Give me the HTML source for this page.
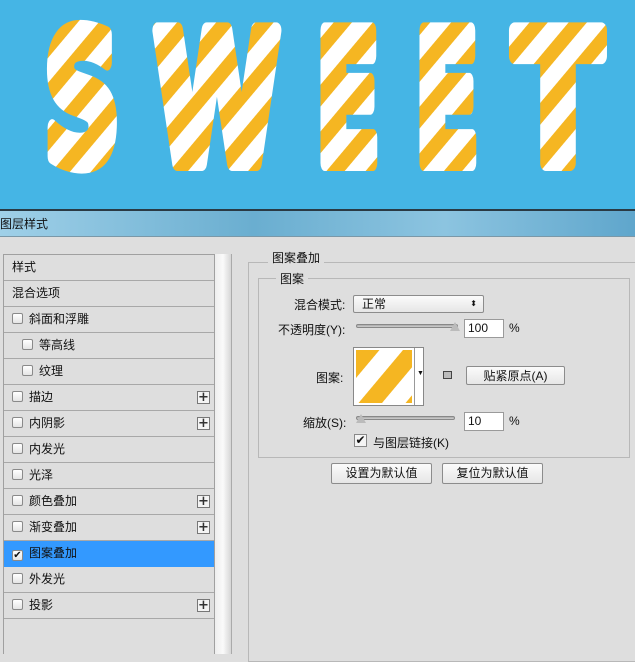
<!DOCTYPE html>
<html><head><meta charset="utf-8"><style>
*{margin:0;padding:0;box-sizing:border-box}
body{width:635px;height:650px;overflow:hidden;background:#dedede;font-family:"Liberation Sans","Noto Sans CJK SC",sans-serif;font-size:12px;color:#111;position:relative}
.a{position:absolute}
.row{position:absolute;left:4px;width:210px;height:26px;border-bottom:1px solid #a8a8a8;line-height:25px;padding-left:8px}
.cb{display:inline-block;width:11px;height:11px;border:1px solid #8a8a8a;background:linear-gradient(#fff,#e4e4e4);border-radius:2px;vertical-align:-1px;margin-right:6px}
.plus{position:absolute;right:4px;top:6px;width:13px;height:13px;border:1px solid #777;background:#f4f4f4;font:bold 13px/11px "DejaVu Sans",sans-serif;text-align:center;color:#333}
.btn{position:absolute;border:1px solid #8c8c8c;border-radius:2px;background:linear-gradient(#fbfbfb,#e6e6e6);text-align:center;line-height:18px}
.inp{position:absolute;background:#fff;border:1px solid #9a9a9a;padding-left:3px;line-height:17px}
.track{position:absolute;height:4px;border:1px solid #888;border-radius:2px;background:linear-gradient(#aaa,#d0d0d0)}
</style></head><body>
<svg class="a" style="left:0;top:0" width="635" height="211">
<defs><pattern id="p" patternUnits="userSpaceOnUse" width="30" height="30" patternTransform="rotate(40)"><rect width="30" height="30" fill="#fff"/><rect width="14" height="30" fill="#f5b622"/></pattern></defs>
<rect width="635" height="211" fill="#45b5e5"/>
<g fill="url(#p)" stroke="url(#p)" stroke-width="16" stroke-linejoin="round" font-family="DejaVu Sans" font-weight="bold" font-size="182">
<text x="44" y="163" textLength="76" lengthAdjust="spacingAndGlyphs">S</text>
<text x="154" y="163" textLength="126" lengthAdjust="spacingAndGlyphs">W</text>
<text x="316" y="163" textLength="64" lengthAdjust="spacingAndGlyphs">E</text>
<text x="415" y="163" textLength="64" lengthAdjust="spacingAndGlyphs">E</text>
<text x="514" y="163" textLength="88" lengthAdjust="spacingAndGlyphs">T</text>
</g>
<rect y="209" width="635" height="2" fill="#2a3a44"/>
</svg>
<div class="a" style="left:0;top:211px;width:635px;height:26px;background:linear-gradient(90deg,#9fd0e8,#6aaed0 40%,#8cc4e0 70%,#5fa6cc);line-height:26px;font-size:12px;border-bottom:1px solid #7a98a8">图层样式</div>
<div class="a" style="left:3px;top:254px;width:212px;height:400px;border:1px solid #a0a0a0;border-bottom:none"></div>
<div class="a" style="left:215px;top:254px;width:17px;height:400px;background:linear-gradient(90deg,#eee,#fafafa,#d6d6d6);border-right:1px solid #aaa"></div>
<div class="row" style="top:255px">样式</div>
<div class="row" style="top:281px">混合选项</div>
<div class="row" style="top:307px"><span class="cb"></span>斜面和浮雕</div>
<div class="row" style="top:333px;padding-left:18px"><span class="cb"></span>等高线</div>
<div class="row" style="top:359px;padding-left:18px"><span class="cb"></span>纹理</div>
<div class="row" style="top:385px"><span class="cb"></span>描边<span class="plus">+</span></div>
<div class="row" style="top:411px"><span class="cb"></span>内阴影<span class="plus">+</span></div>
<div class="row" style="top:437px"><span class="cb"></span>内发光</div>
<div class="row" style="top:463px"><span class="cb"></span>光泽</div>
<div class="row" style="top:489px"><span class="cb"></span>颜色叠加<span class="plus">+</span></div>
<div class="row" style="top:515px"><span class="cb"></span>渐变叠加<span class="plus">+</span></div>
<div class="row" style="top:541px;background:#3399ff;border-bottom-color:#3399ff"><span class="cb" style="font-size:10px;line-height:9px;text-align:center">✔</span>图案叠加</div>
<div class="row" style="top:567px"><span class="cb"></span>外发光</div>
<div class="row" style="top:593px"><span class="cb"></span>投影<span class="plus">+</span></div>
<div class="a" style="left:248px;top:262px;width:400px;height:400px;border:1px solid #b8b8b8"></div>
<div class="a" style="left:268px;top:249px;background:#dedede;padding:0 4px">图案叠加</div>
<div class="a" style="left:258px;top:278px;width:372px;height:180px;border:1px solid #b8b8b8"></div>
<div class="a" style="left:276px;top:270px;background:#dedede;padding:0 4px">图案</div>
<div class="a" style="left:294px;top:296px">混合模式:</div>
<div class="btn" style="left:353px;top:295px;width:131px;height:18px;text-align:left;padding-left:8px;line-height:16px">正常<span style="position:absolute;right:6px;font-size:8px">⬍</span></div>
<div class="a" style="left:278px;top:321px">不透明度(Y):</div>
<div class="track" style="left:356px;top:324px;width:102px"></div>
<div class="a" style="left:450px;top:322px;width:0;height:0;border-left:5px solid transparent;border-right:5px solid transparent;border-bottom:9px solid #bbb"></div>
<div class="inp" style="left:464px;top:319px;width:40px;height:19px">100</div>
<div class="a" style="left:509px;top:321px">%</div>
<div class="a" style="left:316px;top:369px">图案:</div>
<div class="a" style="left:353px;top:347px;width:71px;height:59px;border:1px solid #888;background:#fff"></div>
<svg class="a" style="left:356px;top:350px" width="56" height="53"><defs><pattern id="q" patternUnits="userSpaceOnUse" width="36" height="36" patternTransform="rotate(40)"><rect width="36" height="36" fill="#fff"/><rect width="18" height="36" fill="#f5b622"/></pattern></defs><rect width="56" height="53" fill="url(#q)"/></svg>
<div class="a" style="left:414px;top:348px;width:1px;height:57px;background:#999"></div>
<div class="a" style="left:417px;top:370px;font-size:7px">▼</div>
<div class="a" style="left:443px;top:371px;width:9px;height:8px;border:1px solid #444;background:#bbb"></div>
<div class="btn" style="left:466px;top:366px;width:99px;height:19px">贴紧原点(A)</div>
<div class="a" style="left:303px;top:414px">缩放(S):</div>
<div class="track" style="left:356px;top:416px;width:99px"></div>
<div class="a" style="left:356px;top:414px;width:0;height:0;border-left:5px solid transparent;border-right:5px solid transparent;border-bottom:9px solid #bbb"></div>
<div class="inp" style="left:464px;top:412px;width:40px;height:19px">10</div>
<div class="a" style="left:509px;top:414px">%</div>
<div class="a" style="left:354px;top:434px;width:13px;height:13px;border:1px solid #888;background:#f4f4f4;font-size:12px;line-height:11px;text-align:center">✔</div>
<div class="a" style="left:373px;top:434px">与图层链接(K)</div>
<div class="btn" style="left:331px;top:463px;width:101px;height:21px">设置为默认值</div>
<div class="btn" style="left:442px;top:463px;width:101px;height:21px">复位为默认值</div>
</body></html>
